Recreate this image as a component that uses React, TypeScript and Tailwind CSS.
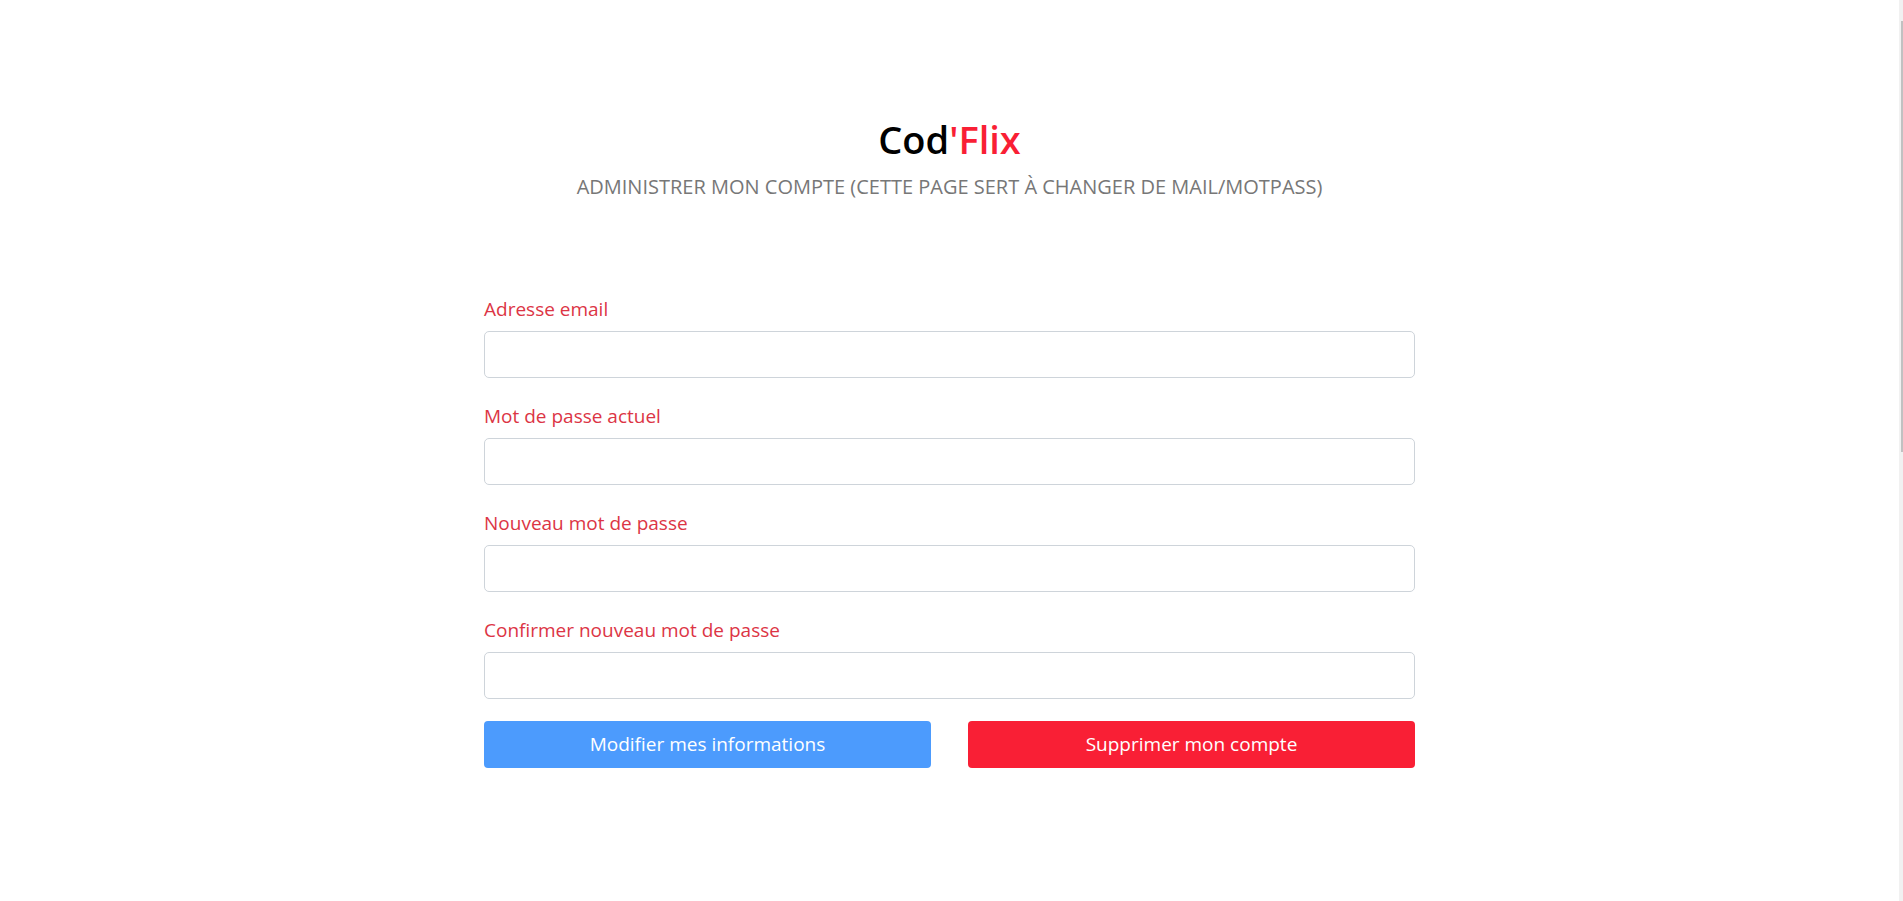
import React from "react";

const fields = [
  "Adresse email",
  "Mot de passe actuel",
  "Nouveau mot de passe",
  "Confirmer nouveau mot de passe",
];

export default function App() {
  return (
    <div className="flex min-h-screen bg-white" style={{ fontFamily: '"Open Sans", "Noto Sans", sans-serif' }}>
      <main className="flex flex-1 flex-col items-center">
        <h1 className="mt-[117px] text-[38px] leading-[44px] font-semibold text-black">
          Cod<span className="text-[#f91f35]">'Flix</span>
        </h1>
        <p className="mt-[12px] text-[20px] leading-[28px] font-medium uppercase text-[#777777]">
          Administrer mon compte (cette page sert à changer de mail/motpass)
        </p>
        <form className="mt-[94px] flex w-[931px] flex-col">
          <div className="flex flex-col gap-[24px]">
            {fields.map((f) => (
              <div key={f} className="flex flex-col">
                <label className="mb-[8px] text-[19px] leading-[28px] text-[#dc3545]">{f}</label>
                <input
                  type="text"
                  className="h-[47px] w-full rounded-[5px] border border-[#ced4da] bg-white px-4 outline-none"
                />
              </div>
            ))}
          </div>
          <div className="mt-[22px] flex gap-[37px]">
            <button
              type="button"
              className="h-[47px] flex-1 rounded-[4px] bg-[#4c9bfd] text-[19px] text-white"
            >
              Modifier mes informations
            </button>
            <button
              type="button"
              className="h-[47px] flex-1 rounded-[4px] bg-[#f91f35] text-[19px] text-white"
            >
              Supprimer mon compte
            </button>
          </div>
        </form>
      </main>
      <div className="flex w-[4px] shrink-0 bg-[#f1f1f1]">
        <div className="ml-[2px] mt-[21px] h-[431px] w-[2px] bg-[#c1c1c1]" />
      </div>
    </div>
  );
}
